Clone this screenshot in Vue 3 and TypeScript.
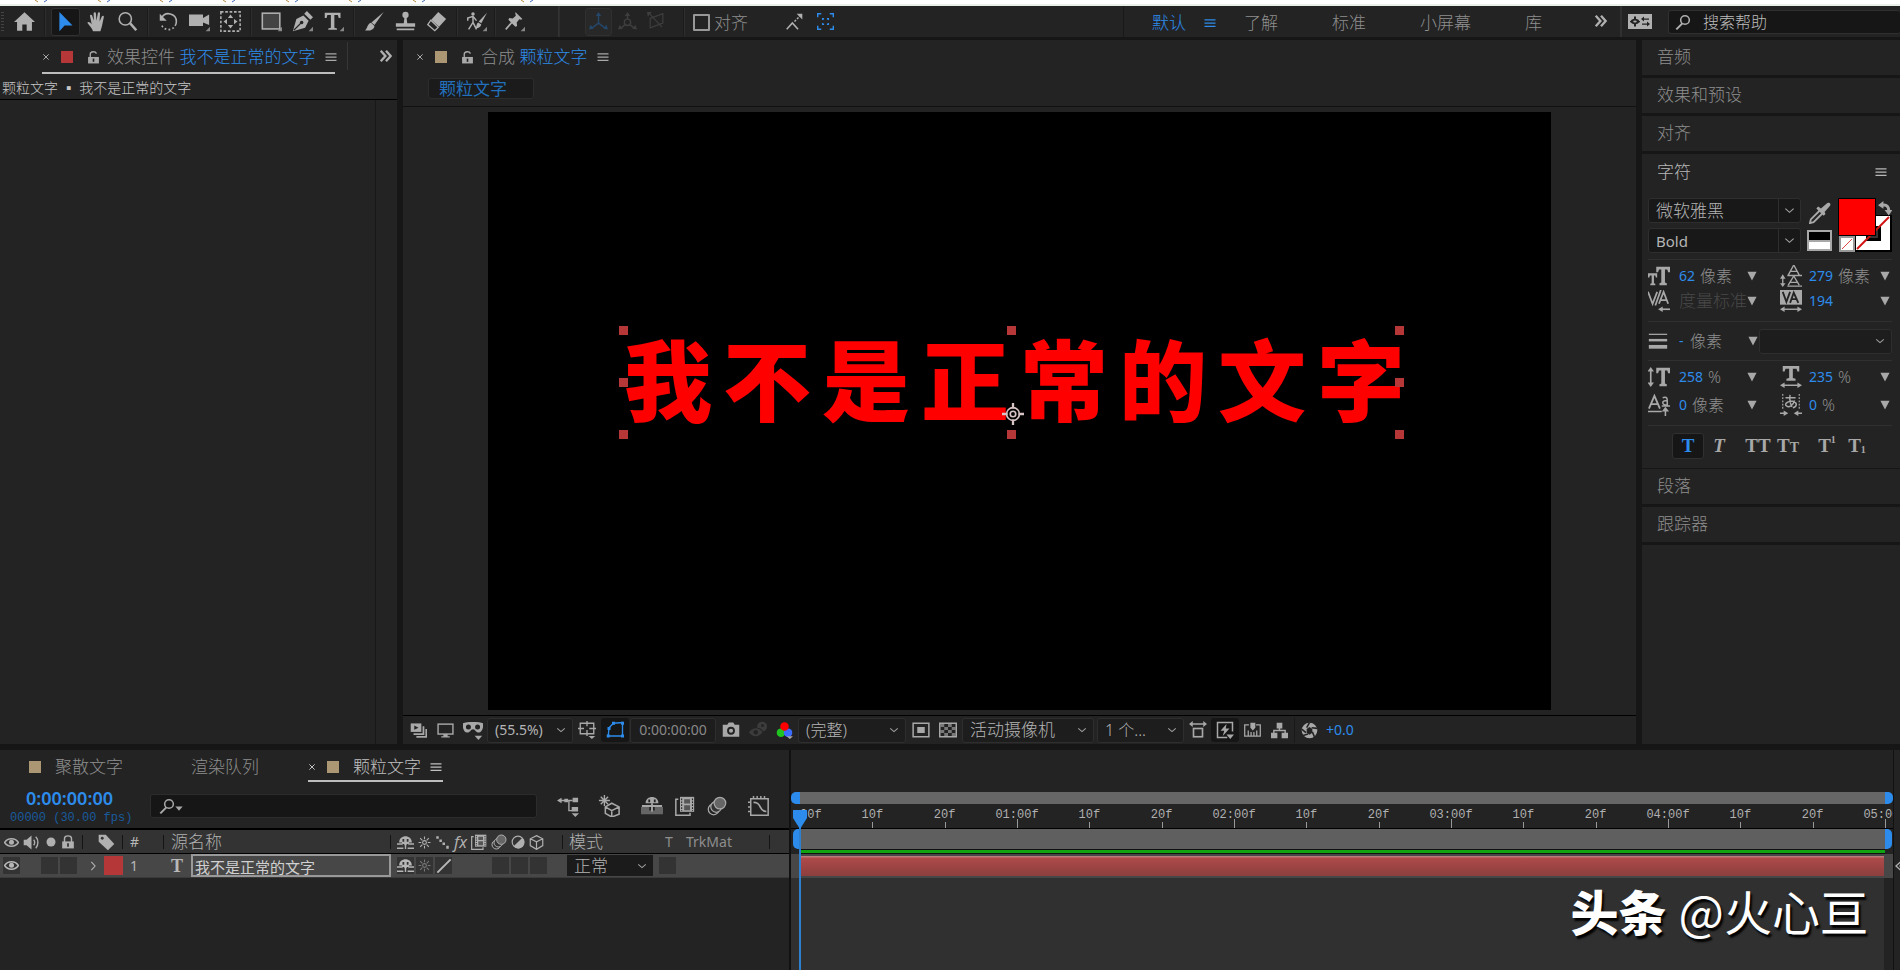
<script setup lang="ts">
import { ref } from 'vue'

const icons: Record<string, string> = {
  home: '<path d="M12 1.500 0 12.500h3.500v10H9.500v-7h5v7h6v-10H24z" fill="currentColor"/>',
  select: '<path d="M5 1v22l6-6.500h9z" fill="currentColor"/>',
  hand: '<path d="M8 23c-1-3-4-6-6.500-9.500 1-1.500 3-1 5 1.500L4.500 5.500c0-1.600 2-1.800 2.500-.3L9 11 8.700 2.500c.2-1.600 2.400-1.600 2.600 0L12 11l1.500-8.500c.4-1.500 2.500-1.200 2.500.3L15.500 12l2.700-6c.8-1.300 2.500-.7 2.200.9L18.500 16c-.6 3-1.500 5-2 7z" fill="currentColor"/>',
  zoom: '<circle cx="9.500" cy="9" r="7" fill="none" stroke="currentColor" stroke-width="1.800"/><path d="m15 14 7 8" stroke="currentColor" stroke-width="3"/>',
  rotate: '<path d="M4 8a9 9 0 0 1 17 4 9 9 0 0 1-1.500 5" fill="none" stroke="currentColor" stroke-width="1.800"/><path d="M2 3v8h8z" fill="currentColor"/><path d="M18 19a9 9 0 0 1-14-3" fill="none" stroke="currentColor" stroke-width="2" stroke-dasharray="2 2.500"/>',
  camera: '<path d="M0 4h16v4l7-4v12l-7-3v4H0z" fill="currentColor"/><path d="M24 18v5h-5z" fill="currentColor" opacity=".7"/>',
  pan: '<rect x="1" y="1" width="22" height="22" fill="none" stroke="currentColor" stroke-width="1.800" stroke-dasharray="3 2"/><path d="m12 4 3 4H9zM12 20l3-4H9zM4 12l4-3v6zM20 12l-4-3v6z" fill="currentColor"/>',
  rect: '<rect x="1.500" y="2.500" width="20" height="18" fill="#444" stroke="currentColor" stroke-width="1.800"/><path d="M24 18v5h-5z" fill="currentColor" opacity=".7"/>',
  pen: '<path d="M1 23 5 9l8-4 6 6-4 8z" fill="currentColor"/><path d="m14 3 3-3 7 7-3 3z" fill="currentColor"/><path d="m2 22 8-8" stroke="#232323" stroke-width="1.300"/><circle cx="11" cy="13" r="2" fill="#232323"/><path d="M24 18v5h-5z" fill="currentColor" opacity=".7"/>',
  type: '<path d="M2 2h18v6h-2l-1-3.500h-4V19l3 1v1.500H6V20l3-1V4.500H5L4 8H2z" fill="currentColor"/><path d="M24 18v5h-5z" fill="currentColor" opacity=".7"/>',
  brush: '<path d="M22.500 1 12 16l-3.500-3zM8 13.500l4 3.500c-1 5-6 6-11 5 3-1 2.500-7.500 7-8.500z" fill="currentColor"/>',
  stamp: '<circle cx="12" cy="4.500" r="3.600" fill="currentColor"/><path d="M10.800 7h2.400l.8 7h9v4H1v-4h9zM2 20h20v2H2z" fill="currentColor"/>',
  eraser: '<path d="m14 1 9 8-8 9-9-8z" fill="currentColor"/><path d="m5.500 10.500 8.500 8-4 4-8-7z" fill="none" stroke="currentColor" stroke-width="1.500"/>',
  puppet: '<circle cx="8" cy="3.500" r="2" fill="currentColor"/><path d="M2 11V8l6-2 4 5M8 6v7l-5 8M8 13l4 8" fill="none" stroke="currentColor" stroke-width="1.700"/><path d="M24 2 17.500 14l-3-2zM14 13l3.500 2.500c-1 3.500-4 4.500-7 4 2-1 1-5.500 3.500-6.500z" fill="currentColor"/><path d="M24 18v5h-5z" fill="currentColor" opacity=".7"/>',
  pin: '<path d="m13 1 8 8-1.500 1-2-.5-3 3.500.5 4-2 1-8-8 1-2 4 .5 3.500-3-.5-2z" fill="currentColor"/><path d="m9 13-7 8" stroke="currentColor" stroke-width="1.800"/><path d="M24 18v5h-5z" fill="currentColor" opacity=".7"/>',
  axis1: '<path d="M12 3v11l-8 6m8-6 8 6" fill="none" stroke="currentColor" stroke-width="1.800"/><path d="m12 0 3.500 5h-7zM0 22l2-6 4 5zM24 22l-6-1 4-5z" fill="currentColor"/>',
  axis2: '<path d="M12 3v6m-3 7-5 4m11-4 5 4" fill="none" stroke="currentColor" stroke-width="1.800"/><circle cx="12" cy="13" r="4" fill="none" stroke="currentColor" stroke-width="1.800"/><path d="m12 0 3.500 5h-7zM0 22l2-6 4 5zM24 22l-6-1 4-5z" fill="currentColor"/>',
  axis3: '<path d="M4 8 20 2v12L4 20zM3 2l16 17" fill="none" stroke="currentColor" stroke-width="1.500"/><path d="M0 0h6L1 6z" fill="currentColor"/>',
  snap1: '<path d="m1 23 8-9 8 9" fill="none" stroke="currentColor" stroke-width="2.200"/><path d="m12 12 8-8" stroke="currentColor" stroke-width="2" stroke-dasharray="3 2"/><path d="M15 1h8v8z" fill="currentColor"/>',
  snap2: '<path d="M1 6V1h5M18 1h5v5M23 18v5h-5M6 23H1v-5" fill="none" stroke="currentColor" stroke-width="2"/><path d="M8 10V8h2M14 8h2v2M16 14v2h-2M10 16H8v-2" fill="none" stroke="currentColor" stroke-width="2"/>',
  menu: '<path d="M1 5.500h22M1 12h22M1 18.500h22" stroke="currentColor" stroke-width="2.500"/>',
  more: '<path d="m3 3 8 9-8 9m9-18 8 9-8 9" fill="none" stroke="currentColor" stroke-width="4"/>',
  close: '<path d="m4 4 16 16M20 4 4 20" stroke="currentColor" stroke-width="3"/>',
  unlock: '<path d="M6 12V6c0-6 11-6 11-1" fill="none" stroke="currentColor" stroke-width="2.500"/><path d="M2 11h20v12H2z" fill="currentColor"/><path d="M12 14v6" stroke="#232323" stroke-width="3"/>',
  lock: '<path d="M6 12V6c0-6 12-6 12 0v6" fill="none" stroke="currentColor" stroke-width="2.500"/><path d="M2 11h20v12H2z" fill="currentColor"/><path d="M12 14v6" stroke="#333" stroke-width="3"/>',
  chevron: '<path d="m3 8 9 8 9-8" fill="none" stroke="currentColor" stroke-width="2.500"/>',
  right: '<path d="m8 2 9 10-9 10" fill="none" stroke="currentColor" stroke-width="2.500"/>',
  down: '<path d="M1 2h22L12 23z" fill="currentColor"/>',
  search: '<circle cx="15" cy="9" r="6.500" fill="none" stroke="currentColor" stroke-width="2.300"/><path d="m11 14-9 9" stroke="currentColor" stroke-width="3"/>',
  dropper: '<path d="m13 7 7-6c3-1 4 1 3 3l-6 7 1 2-2 2-8-8 2-2z" fill="currentColor"/><path d="M12 9 2 19l-1 4 4-1 10-10" fill="none" stroke="currentColor" stroke-width="2"/>',
  swap: '<path d="M7 7c8-2 11 3 11 10" fill="none" stroke="currentColor" stroke-width="5"/><path d="m0 7 9-7v13zM11 15h13l-6 9z" fill="currentColor"/>',
  fontSize: '<path d="M9 2h15v6h-2l-1-3h-2.500v14l2 1v2h-8v-2l2-1V5H12l-1 3H9z" fill="currentColor"/><path d="M0 9h10v4.500H8.500L8 11.500H6.500V20l1.500.500V22H2.500v-1.500L4 20v-8.500H2l-.5 2H0z" fill="currentColor"/>',
  leading: '<path d="M9 11 15 0l6 11M11 7h8M9 22l6-10 6 10M11 19h8M8 11.500h16M8 23h16" fill="none" stroke="currentColor" stroke-width="1.500"/><path d="M3 14v8" stroke="currentColor" stroke-width="1.500"/><path d="m3 10 3 5H0zM3 24l3-4H0z" fill="currentColor"/>',
  kerning: '<path d="m0 2 5 13 5-13M8 17 14 0M12 15l5-13 5 13M14 11h7" fill="none" stroke="currentColor" stroke-width="1.900"/><path d="M14 21h10" stroke="currentColor" stroke-width="1.800"/><path d="m11 21 5-3v6z" fill="currentColor"/>',
  tracking: '<path d="M0 0h24v16H0z" fill="currentColor"/><path d="m3 2 4 11 4-11M11 14l4-11 5 11M13 10h6" fill="none" stroke="#232323" stroke-width="2"/><path d="M3 21h18" stroke="currentColor" stroke-width="1.500"/><path d="m0 21 5-3v6zM24 21l-5-3v6z" fill="currentColor"/>',
  stroke: '<path d="M1 4h22" stroke="currentColor" stroke-width="1.500"/><path d="M1 11h22" stroke="currentColor" stroke-width="3"/><path d="M1 19h22" stroke="currentColor" stroke-width="4.500"/>',
  scaleV: '<path d="M9 2h15v6h-2l-1-3h-2.500v14l2 1v2h-8v-2l2-1V5H12l-1 3H9z" fill="currentColor"/><path d="M3 5v14" stroke="currentColor" stroke-width="1.800"/><path d="m3 1 3.500 5h-7zM3 23l3.500-5h-7z" fill="currentColor"/>',
  scaleH: '<path d="M3 0h18v6h-2l-1-3h-4v10l3 1v2H7v-2l3-1V3H6L5 6H3z" fill="currentColor"/><path d="M4 21h16" stroke="currentColor" stroke-width="1.600"/><path d="m0 21 5-3v6zM24 21l-5-3v6z" fill="currentColor"/>',
  baseline: '<path d="m1 16 6-14 6 14M3 11h8" fill="none" stroke="currentColor" stroke-width="2"/><path d="M16 4c6-2 5 2 5 8-6 0-7-5 0-5M0 19h15M15 13h9" fill="none" stroke="currentColor" stroke-width="1.700"/><path d="M19 18v6" stroke="currentColor" stroke-width="1.700"/><path d="m19 14 4 5h-8z" fill="currentColor"/>',
  tsume: '<path d="M3 0v16M21 0v16" stroke="currentColor" stroke-width="1.300" stroke-dasharray="2 1.500"/><path d="M6 4h11M11 1c-1 5 0 9 2 13M16 7c-2 6-6 8-9 6s2-6 7-5 5 6 0 7" fill="none" stroke="currentColor" stroke-width="1.600"/><path d="M0 21h6M18 21h6" stroke="currentColor" stroke-width="1.600"/><path d="m9 21-5-3v6zM15 21l5-3v6z" fill="currentColor"/>',
  stack: '<rect x="1" y="2" width="15" height="12" fill="currentColor"/><path d="m6 5 6 3-6 3z" fill="#232323"/><path d="M19 6v11H5M23 10v11H9" fill="none" stroke="currentColor" stroke-width="2.500"/>',
  monitor: '<rect x="1.500" y="3" width="21" height="14" fill="none" stroke="currentColor" stroke-width="2"/><path d="M9 17h6v3h3v2H6v-2h3z" fill="currentColor"/>',
  mask: '<path d="M0 4c4-2 20-2 24 0 1 6-2 11-5 11-4 0-4-4-7-4s-3 4-7 4C1 15-1 9 0 4z" fill="currentColor"/><circle cx="6.500" cy="8.500" r="3" fill="#232323"/><circle cx="17.500" cy="8.500" r="3" fill="#232323"/><path d="M14 19h9l-4.500 5z" fill="currentColor"/>',
  guides: '<path d="M3 3h18v14H3zM12 0v7m0 5v8M0 10h8m7 0h9" fill="none" stroke="currentColor" stroke-width="1.800"/><path d="M14 20h9l-4.500 4z" fill="currentColor"/>',
  shape: '<path d="M3 20 4 9l6-6 12-1v18z" fill="none" stroke="currentColor" stroke-width="1.800"/><path d="M1 18h4v4H1zM20 18h4v4h-4zM20 1h4v4h-4zM8 1h4v4H8zM2 8h4v4H2z" fill="currentColor"/>',
  snapshot: '<path d="M1 5h6l2-3h6l2 3h6v16H1z" fill="currentColor"/><circle cx="12" cy="13" r="4" fill="none" stroke="#232323" stroke-width="2.500"/>',
  peek: '<path d="M0 15c5-7 14-7 18 0-5 7-13 7-18 0z" fill="currentColor"/><circle cx="9" cy="15" r="3" fill="#232323"/><path d="M11 6c1-7 13-7 13 1 0 4-2 6-5 7-2-4-5-5-8-5z" fill="currentColor"/><circle cx="18" cy="6" r="2" fill="#232323"/>',
  rgb: '<circle cx="7" cy="15" r="6" fill="#1fc41f"/><circle cx="17" cy="15" r="6" fill="#3b6bff"/><circle cx="12" cy="6.500" r="6" fill="#f00"/><path d="M15 20h9l-4.500 4z" fill="currentColor"/>',
  roi: '<rect x="1.500" y="3" width="21" height="18" fill="none" stroke="currentColor" stroke-width="2"/><path d="M7 8h10v8H7z" fill="currentColor"/>',
  checker: '<rect x="1" y="3" width="22" height="18" fill="none" stroke="currentColor" stroke-width="2"/><path d="M2 4h5v4H2zM12 4h5v4h-5zM7 8h5v4H7zM17 8h5v4h-5zM2 12h5v4H2zM12 12h5v4h-5zM7 16h5v4H7zM17 16h5v4h-5z" fill="currentColor" opacity=".65"/>',
  aspect: '<path d="M3 4h18" stroke="currentColor" stroke-width="2"/><path d="m0 4 5-4v8zM24 4l-5-4v8z" fill="currentColor"/><rect x="6" y="10" width="12" height="11" fill="none" stroke="currentColor" stroke-width="2.200"/>',
  fast: '<path d="M22 14V2H2v20h13" fill="none" stroke="currentColor" stroke-width="2"/><path d="m14 4-8 9h5l-2 7 9-10h-5zM14 18h10l-5 6z" fill="currentColor"/>',
  timeline: '<path d="M7 4H1v16h22V4h-6M6 19v-7M10 19v-5M14 19v-5M18 19v-7" fill="none" stroke="currentColor" stroke-width="1.800"/><path d="M9 1h7v7l-3.500 4L9 8z" fill="currentColor"/>',
  flow: '<path d="M8 1h8v8H8zM0 15h9v8H0zM15 15h9v8h-9z" fill="currentColor"/><path d="M12 8v4M4 16v-4h16v4" fill="none" stroke="currentColor" stroke-width="2"/>',
  aperture: '<circle cx="12" cy="12" r="11" fill="currentColor"/><path d="M12 1 8 8m15 1-8-1m4 13-3-7M3 19l7-2m-9-7 6 5" stroke="#232323" stroke-width="2.200"/><path d="m12 7 4 3v5l-4 3-4-3v-5z" fill="#232323"/>',
  workspace: '<path d="M0 0h24v24H0z" fill="currentColor"/><circle cx="7" cy="12" r="3" fill="none" stroke="#232323" stroke-width="2.500"/><path d="M7 4v4m0 8v4M2 12h2m6 0h2M14 8h7M14 16h7" stroke="#232323" stroke-width="2"/><path d="m13 8 3-4v8zM22 16l-3-4v8z" fill="#232323"/>',
  tree: '<path d="M2 6h15M13 6v11h4" fill="none" stroke="currentColor" stroke-width="1.500"/><path d="m0 6 5-3v6zM8 4h4v4H8zM17 3h6v5h-6zM16 13h7v5h-7zM16 20h8l-4 4z" fill="currentColor"/>',
  draft: '<path d="M7 0v12M1 6h12M3 2l8 8M11 2l-8 8" stroke="currentColor" stroke-width="1.500"/><path d="m15 9 8 4v8l-8 3-7-4v-7zM8 13l7 4 8-4m-8 4v7" fill="none" stroke="currentColor" stroke-width="1.700"/>',
  shyBox: '<path d="M0 13h9v4h6v-4h9v8H0z" fill="currentColor" opacity=".5"/><path d="M1 12h22M12 9v9" stroke="currentColor" stroke-width="2"/><path d="M5 9c0-9 14-9 14 0z" fill="currentColor"/><path d="M9 5v3m6-3v3" stroke="#232323" stroke-width="2"/>',
  shy: '<path d="M0 14h9m6 0h9M0 20h9m6 0h9M12 10v11" stroke="currentColor" stroke-width="2"/><path d="M3 12c0-12 18-12 18 0h-4v4H7v-4z" fill="currentColor"/><path d="M9 7v4m6-4v4M9 17v-3m6 3v-3" stroke="#333" stroke-width="2.500"/>',
  sun: '<circle cx="12" cy="12" r="3.500" fill="none" stroke="currentColor" stroke-width="2"/><path d="M12 1v5m0 12v5M1 12h5m12 0h5M4 4l4 4m8 8 4 4M20 4l-4 4m-8 8-4 4" stroke="currentColor" stroke-width="2"/>',
  steps: '<path d="M2 2h4v4H2zM7 7h4v4H7zM12 12h4v4h-4zM18 17h4v5h-4z" fill="currentColor"/>',
  slash: '<path d="M2 22 22 2" stroke="currentColor" stroke-width="3"/>',
  film: '<path d="M4 4H1v19h17v-3" fill="none" stroke="currentColor" stroke-width="1.800"/><path d="M6 1h17v18H6z" fill="currentColor"/><path d="M8 3v15M21 3v15" stroke="#232323" stroke-width="1.300" stroke-dasharray="2 1.500"/><path d="M11 4h7v5h-7zM11 11h7v6h-7z" fill="#555"/>',
  blur: '<circle cx="8" cy="16" r="6.500" fill="none" stroke="currentColor" stroke-width="1.500"/><circle cx="11" cy="13" r="6.500" fill="#333" stroke="currentColor" stroke-width="1.500"/><circle cx="15.500" cy="8.500" r="7" fill="#666" stroke="currentColor" stroke-width="1.500"/>',
  graph: '<path d="M3 4h19v18H3zM6 1v3m4-3v3m4-3v3m4-3v3M0 8h3m-3 5h3m-3 5h3" fill="none" stroke="currentColor" stroke-width="1.600"/><path d="M6 8c10 0 5 10 14 10" fill="none" stroke="currentColor" stroke-width="1.800"/>',
  half: '<circle cx="12" cy="12" r="10" fill="none" stroke="currentColor" stroke-width="2"/><path d="M19 5A10 10 0 1 1 5 19z" fill="currentColor"/>',
  cube: '<path d="m12 1 10 5v11l-10 6-10-6V6zM2 6l10 5 10-5M12 11v12" fill="none" stroke="currentColor" stroke-width="1.900"/>',
  eye: '<path d="M1 12C6 4 18 4 23 12 18 20 6 20 1 12z" fill="none" stroke="currentColor" stroke-width="2.300"/><circle cx="12" cy="11.500" r="4" fill="currentColor"/>',
  speaker: '<path d="M1 8h4l7-6v20l-7-6H1z" fill="currentColor"/><path d="M15 8c2 2 2 6 0 8m3-12c4 4 4 12 0 16" fill="none" stroke="currentColor" stroke-width="2"/>',
  dot: '<circle cx="12" cy="12" r="9" fill="currentColor"/>',
  tag: '<path d="M1 1h10l12 13-9 9L1 11z" fill="currentColor"/><circle cx="6" cy="6" r="2" fill="#333"/>',
  anchor: '<circle cx="12" cy="12" r="7" fill="none" stroke="#d8c4c4" stroke-width="1.800"/><circle cx="12" cy="12" r="3" fill="none" stroke="#d8c4c4" stroke-width="1.800"/><path d="M12 0v6m0 12v6M0 12h6m12 0h6" stroke="#d8c4c4" stroke-width="2.500"/>',
  keyframe: '<path d="M13 3 3 12l10 9M13 8l-4 4 4 4" fill="none" stroke="currentColor" stroke-width="2"/>',
}

interface Tool { icon: string; label: string; active?: boolean }
const toolGroups: Tool[][] = [
  [{ icon: 'home', label: '主页' }],
  [{ icon: 'select', label: '选取', active: true }, { icon: 'hand', label: '手形' }, { icon: 'zoom', label: '缩放' }],
  [{ icon: 'rotate', label: '旋转' }, { icon: 'camera', label: '摄像机' }, { icon: 'pan', label: '锚点' }],
  [{ icon: 'rect', label: '矩形' }, { icon: 'pen', label: '钢笔' }, { icon: 'type', label: '文字' }],
  [{ icon: 'brush', label: '画笔' }, { icon: 'stamp', label: '仿制图章' }, { icon: 'eraser', label: '橡皮擦' }],
  [{ icon: 'puppet', label: 'Roto 笔刷' }],
  [{ icon: 'pin', label: '人偶位置控点' }],
]
const workspaces = ['了解', '标准', '小屏幕', '库']
const menuMarks = [35, 98, 160, 223, 286, 349, 413, 521]

const title = ref('我不是正常的文字')
const layerName = ref('我不是正常的文字')
const handles = [[0, 0], [50, 0], [100, 0], [0, 50], [100, 50], [0, 100], [50, 100], [100, 100]]

interface Metric { icon: string; value: string; unit: string; label: string; muted?: boolean }
const sizeRows: Metric[][] = [
  [{ icon: 'fontSize', value: '62', unit: '像素', label: '字体大小' }, { icon: 'leading', value: '279', unit: '像素', label: '行距' }],
  [{ icon: 'kerning', value: '', unit: '度量标准', label: '字偶间距', muted: true }, { icon: 'tracking', value: '194', unit: '', label: '字符间距' }],
]
const scaleRows: Metric[][] = [
  [{ icon: 'scaleV', value: '258', unit: '%', label: '垂直缩放' }, { icon: 'scaleH', value: '235', unit: '%', label: '水平缩放' }],
  [{ icon: 'baseline', value: '0', unit: '像素', label: '基线偏移' }, { icon: 'tsume', value: '0', unit: '%', label: '比例间距' }],
]

const ticks = Array.from({ length: 16 }, (_, i) => {
  const sec = Math.floor(i / 3)
  const rest = i % 3
  const text = rest ? `${rest}0f` : i ? `0${sec}:00f` : '00f'
  return { text, major: rest === 0, first: i === 0, left: (i / 15) * 100 }
})
</script>

<template>
  <div class="app">
    <div class="menu-edge">
      <svg width="600" height="4" aria-hidden="true">
        <g v-for="m in menuMarks" :key="m">
          <path :d="`M${m} 0l3 2`" stroke="#b98a3c" stroke-width="1" />
          <path :d="`M${m + 12} 0l-3 2`" stroke="#3c6cb9" stroke-width="1" />
        </g>
      </svg>
    </div>

    <header class="toolbar">
      <span class="grip"></span>
      <template v-for="(group, g) in toolGroups" :key="g">
        <span v-if="g" class="sep"></span>
        <button v-for="t in group" :key="t.icon" class="tool" :class="{ active: t.active, lone: g > 4 }" :aria-label="t.label">
          <svg viewBox="0 0 24 24" v-html="icons[t.icon]"></svg>
        </button>
      </template>
      <span class="sep wide"></span>
      <button class="tool axis boxed" aria-label="本地轴"><svg viewBox="0 0 24 24" v-html="icons.axis1"></svg></button>
      <button class="tool axis" aria-label="世界轴"><svg viewBox="0 0 24 24" v-html="icons.axis2"></svg></button>
      <button class="tool axis" aria-label="视图轴"><svg viewBox="0 0 24 24" v-html="icons.axis3"></svg></button>
      <span class="sep after-axis"></span>
      <label class="snap"><input type="checkbox" />对齐</label>
      <button class="tool small" aria-label="对齐边线"><svg viewBox="0 0 24 24" v-html="icons.snap1"></svg></button>
      <button class="tool small blue" aria-label="对齐特性"><svg viewBox="0 0 24 24" v-html="icons.snap2"></svg></button>

      <nav class="workspaces">
        <a href="#" class="blue">默认</a>
        <button class="blue ws-menu" aria-label="工作区菜单"><svg class="i12" viewBox="0 0 24 24" v-html="icons.menu"></svg></button>
        <a v-for="w in workspaces" :key="w" href="#">{{ w }}</a>
        <button class="ws-more" aria-label="更多工作区"><svg class="i14" viewBox="0 0 24 24" v-html="icons.more"></svg></button>
      </nav>
      <button class="ws-set" aria-label="同步设置"><svg class="i24" viewBox="0 0 24 24" preserveAspectRatio="none" v-html="icons.workspace"></svg></button>
      <label class="help">
        <svg class="i16" viewBox="0 0 24 24" v-html="icons.search"></svg>
        <input type="text" placeholder="搜索帮助" aria-label="搜索帮助" />
      </label>
    </header>

    <main class="main">
      <section class="effects">
        <div class="tabs">
          <div class="tab underlined">
            <button aria-label="关闭"><svg class="i8" viewBox="0 0 24 24" v-html="icons.close"></svg></button>
            <span class="swatch red"></span>
            <svg class="i13" viewBox="0 0 24 24" v-html="icons.unlock"></svg>
            <span class="tab-name">效果控件 <span class="blue">{{ title }}</span></span>
            <button aria-label="面板菜单"><svg class="i12" viewBox="0 0 24 24" v-html="icons.menu"></svg></button>
          </div>
          <span class="tab-line"></span>
          <button class="push" aria-label="更多面板"><svg class="i14" viewBox="0 0 24 24" v-html="icons.more"></svg></button>
        </div>
        <div class="path">颗粒文字 ▪ {{ title }}</div>
        <div class="effects-body"></div>
      </section>

      <section class="viewer">
        <div class="tabs">
          <div class="tab">
            <button aria-label="关闭"><svg class="i8" viewBox="0 0 24 24" v-html="icons.close"></svg></button>
            <span class="swatch tan"></span>
            <svg class="i13" viewBox="0 0 24 24" v-html="icons.unlock"></svg>
            <span class="tab-name">合成 <span class="blue">颗粒文字</span></span>
            <button aria-label="面板菜单"><svg class="i12" viewBox="0 0 24 24" v-html="icons.menu"></svg></button>
          </div>
        </div>
        <div class="crumbs"><button class="crumb">颗粒文字</button></div>
        <div class="stage">
          <div class="canvas">
            <div class="layer-box">
              <p class="hero">{{ title }}</p>
              <i v-for="(h, n) in handles" :key="n" class="handle" :style="{ left: h[0] + '%', top: h[1] + '%' }"></i>
              <svg class="anchor" viewBox="0 0 24 24" v-html="icons.anchor"></svg>
            </div>
          </div>
        </div>
        <footer class="viewbar">
          <button class="vb" aria-label="始终预览"><svg class="i17" viewBox="0 0 24 24" v-html="icons.stack"></svg></button>
          <button class="vb" aria-label="主查看器"><svg class="i17" viewBox="0 0 24 24" v-html="icons.monitor"></svg></button>
          <button class="vb wide" aria-label="沉浸式视频"><svg class="i20" viewBox="0 0 24 24" v-html="icons.mask"></svg></button>
          <span class="pick w-zoom"><select aria-label="放大率"><option>(55.5%)</option></select><svg viewBox="0 0 24 24" v-html="icons.chevron"></svg></span>
          <button class="vb wide" aria-label="网格和参考线"><svg class="i18" viewBox="0 0 24 24" v-html="icons.guides"></svg></button>
          <button class="vb wide blue pressed" aria-label="蒙版可见性"><svg class="i18" viewBox="0 0 24 24" v-html="icons.shape"></svg></button>
          <button class="time">0:00:00:00</button>
          <button class="vb" aria-label="快照"><svg class="i18" viewBox="0 0 24 24" v-html="icons.snapshot"></svg></button>
          <button class="vb dim" aria-label="显示快照"><svg class="i18" viewBox="0 0 24 24" v-html="icons.peek"></svg></button>
          <button class="vb" aria-label="通道"><svg class="i17" viewBox="0 0 24 24" v-html="icons.rgb"></svg></button>
          <span class="pick w-res"><select aria-label="分辨率"><option>(完整)</option></select><svg viewBox="0 0 24 24" v-html="icons.chevron"></svg></span>
          <button class="vb" aria-label="目标区域"><svg class="i18" viewBox="0 0 24 24" v-html="icons.roi"></svg></button>
          <button class="vb" aria-label="透明网格"><svg class="i18" viewBox="0 0 24 24" v-html="icons.checker"></svg></button>
          <span class="pick w-cam"><select aria-label="3D 视图"><option>活动摄像机</option></select><svg viewBox="0 0 24 24" v-html="icons.chevron"></svg></span>
          <span class="pick w-view"><select aria-label="视图布局"><option>1 个...</option></select><svg viewBox="0 0 24 24" v-html="icons.chevron"></svg></span>
          <button class="vb" aria-label="像素长宽比"><svg class="i18" viewBox="0 0 24 24" v-html="icons.aspect"></svg></button>
          <button class="vb wide pressed" aria-label="快速预览"><svg class="i18" viewBox="0 0 24 24" v-html="icons.fast"></svg></button>
          <button class="vb" aria-label="时间轴"><svg class="i17" viewBox="0 0 24 24" v-html="icons.timeline"></svg></button>
          <button class="vb" aria-label="流程图"><svg class="i17" viewBox="0 0 24 24" v-html="icons.flow"></svg></button>
          <span class="vsep"></span>
          <button class="vb" aria-label="重置曝光度"><svg class="i17" viewBox="0 0 24 24" v-html="icons.aperture"></svg></button>
          <span class="blue exposure">+0.0</span>
        </footer>
      </section>

      <aside class="side">
        <button class="fold">音频</button>
        <button class="fold">效果和预设</button>
        <button class="fold">对齐</button>
        <div class="char-head">字符<button aria-label="面板菜单"><svg class="i12" viewBox="0 0 24 24" v-html="icons.menu"></svg></button></div>
        <div class="fonts">
          <div class="font-picks">
            <span class="pick split"><select aria-label="字体"><option>微软雅黑</option></select><svg viewBox="0 0 24 24" v-html="icons.chevron"></svg></span>
            <span class="pick split"><select aria-label="字体样式"><option>Bold</option></select><svg viewBox="0 0 24 24" v-html="icons.chevron"></svg></span>
          </div>
          <div class="font-aux">
            <button aria-label="吸管"><svg class="i22" viewBox="0 0 24 24" v-html="icons.dropper"></svg></button>
            <button class="bw" aria-label="黑白"></button>
          </div>
          <svg class="colors" viewBox="0 0 54 54" aria-label="填充和描边">
            <path d="M17 17h37v37H17z" fill="#000" /><path d="M18 18h34v34H18z" fill="#fff" />
            <path d="M28 28h15v15H28z" fill="#000" /><path d="M31 31h9v9h-9z" fill="#333" />
            <path d="M19 51 51 19" stroke="#d01212" stroke-width="2" />
            <path d="M1 38h16v16H1z" fill="#999" /><path d="M3 40h12v12H3z" fill="#fff" /><path d="m4 51 10-10" stroke="#d44" />
            <path d="M37 0h17v17H38z" fill="#232323" />
            <path d="M0 0h38v38H0z" fill="#000" /><path d="M1 1h36v36H1z" fill="red" />
            <g class="swap" v-html="icons.swap"></g>
          </svg>
        </div>
        <div class="group">
          <div v-for="(row, r) in sizeRows" :key="r" class="metrics">
            <template v-for="m in row" :key="m.label">
              <svg class="i22" viewBox="0 0 24 24" v-html="icons[m.icon]"></svg>
              <label class="metric" :class="{ muted: m.muted }">
                <input v-if="m.value" type="text" :value="m.value" :aria-label="m.label" :style="{ width: m.value.length + 'ch' }" />{{ m.unit }}
              </label>
              <button :aria-label="m.label + '选项'"><svg class="i10" viewBox="0 0 24 24" v-html="icons.down"></svg></button>
            </template>
          </div>
        </div>
        <div class="group strokes">
          <svg class="i20" viewBox="0 0 24 24" v-html="icons.stroke"></svg>
          <label class="metric"><input type="text" value="-" aria-label="描边宽度" class="dash" />像素</label>
          <button aria-label="描边选项"><svg class="i10" viewBox="0 0 24 24" v-html="icons.down"></svg></button>
          <span class="pick"><select aria-label="描边方式"><option></option></select><svg viewBox="0 0 24 24" v-html="icons.chevron"></svg></span>
        </div>
        <div class="group scale">
          <div v-for="(row, r) in scaleRows" :key="r" class="metrics">
            <template v-for="m in row" :key="m.label">
              <svg class="i22" viewBox="0 0 24 24" v-html="icons[m.icon]"></svg>
              <label class="metric">
                <input type="text" :value="m.value" :aria-label="m.label" :style="{ width: m.value.length + 'ch' }" />{{ m.unit }}
              </label>
              <button :aria-label="m.label + '选项'"><svg class="i10" viewBox="0 0 24 24" v-html="icons.down"></svg></button>
            </template>
          </div>
        </div>
        <div class="styles">
          <button class="on" aria-label="仿粗体">T</button>
          <button class="it" aria-label="仿斜体">T</button>
          <button class="caps" aria-label="全部大写字母">TT</button>
          <button aria-label="小型大写字母">T<small>T</small></button>
          <button aria-label="上标" class="sup">T<sup>1</sup></button>
          <button aria-label="下标">T<sub>1</sub></button>
        </div>
        <button class="fold">段落</button>
        <button class="fold">跟踪器</button>
      </aside>
    </main>

    <section class="timeline">
      <div class="tl-left">
        <div class="tl-tabs">
          <button class="tl-tab first"><span class="swatch tan"></span>聚散文字</button>
          <button class="tl-tab mid">渲染队列</button>
          <div class="tl-tab current">
            <button aria-label="关闭"><svg class="i8" viewBox="0 0 24 24" v-html="icons.close"></svg></button>
            <span class="swatch tan"></span>颗粒文字
            <button class="push" aria-label="面板菜单"><svg class="i12" viewBox="0 0 24 24" v-html="icons.menu"></svg></button>
          </div>
        </div>
        <div class="tl-tools">
          <div class="clock"><strong>0:00:00:00</strong><span>00000 (30.00 fps)</span></div>
          <label class="tl-search">
            <svg class="i16" viewBox="0 0 24 24" v-html="icons.search"></svg><svg class="tri" viewBox="0 0 24 24" preserveAspectRatio="none" v-html="icons.down"></svg>
            <input type="text" aria-label="搜索图层" />
          </label>
          <button aria-label="合成微型流程图"><svg class="i22" viewBox="0 0 24 24" v-html="icons.tree"></svg></button>
          <button aria-label="草图 3D" class="g1"><svg class="i22" viewBox="0 0 24 24" v-html="icons.draft"></svg></button>
          <button aria-label="隐藏消隐图层" class="g2"><svg class="i22" viewBox="0 0 24 24" v-html="icons.shyBox"></svg></button>
          <button aria-label="帧混合" class="g3"><svg class="i20" viewBox="0 0 24 24" v-html="icons.film"></svg></button>
          <button aria-label="运动模糊" class="g3"><svg class="i20" viewBox="0 0 24 24" v-html="icons.blur"></svg></button>
          <button aria-label="图表编辑器" class="g2"><svg class="i22" viewBox="0 0 24 24" v-html="icons.graph"></svg></button>
        </div>
        <div class="cols head">
          <span class="av">
            <svg class="i15" viewBox="0 0 24 24" v-html="icons.eye"></svg>
            <svg class="i17" viewBox="0 0 24 24" v-html="icons.speaker"></svg>
            <svg class="i12" viewBox="0 0 24 24" v-html="icons.dot"></svg>
            <svg class="i14" viewBox="0 0 24 24" v-html="icons.lock"></svg>
          </span>
          <span class="c-tag"><svg class="i17" viewBox="0 0 24 24" v-html="icons.tag"></svg></span>
          <span class="c-num">#</span>
          <span class="c-name">源名称</span>
          <span class="switches">
            <svg class="i17" viewBox="0 0 24 24" v-html="icons.shy"></svg>
            <svg class="i13" viewBox="0 0 24 24" v-html="icons.sun"></svg>
            <svg class="i15" viewBox="0 0 24 24" v-html="icons.steps"></svg>
            <em>fx</em>
            <svg class="i16" viewBox="0 0 24 24" v-html="icons.film"></svg>
            <svg class="i16" viewBox="0 0 24 24" v-html="icons.blur"></svg>
            <svg class="i14" viewBox="0 0 24 24" v-html="icons.half"></svg>
            <svg class="i15" viewBox="0 0 24 24" v-html="icons.cube"></svg>
          </span>
          <span class="c-mode">模式</span>
          <span class="c-t">T</span>
          <span class="c-trk">TrkMat</span>
        </div>
        <div class="cols row">
          <span class="av cells">
            <button class="cell" aria-label="可见"><svg class="i15" viewBox="0 0 24 24" v-html="icons.eye"></svg></button>
            <i class="hole"></i>
            <button class="cell" aria-label="独奏"></button>
            <button class="cell" aria-label="锁定"></button>
          </span>
          <span class="c-tag lay"><button aria-label="展开"><svg class="i10" viewBox="0 0 24 24" v-html="icons.right"></svg></button><i class="label-red"></i></span>
          <span class="c-num">1</span>
          <span class="c-type">T</span>
          <input v-model="layerName" class="name" type="text" aria-label="图层名称" />
          <span class="switches cells">
            <button class="cell" aria-label="消隐"><svg class="i17" viewBox="0 0 24 24" v-html="icons.shy"></svg></button>
            <button class="cell faint" aria-label="折叠"><svg class="i13" viewBox="0 0 24 24" v-html="icons.sun"></svg></button>
            <button class="cell" aria-label="品质"><svg class="i16" viewBox="0 0 24 24" v-html="icons.slash"></svg></button>
            <i class="hole"></i><i class="hole"></i>
            <button class="cell" aria-label="运动模糊开关"></button>
            <button class="cell" aria-label="调整图层"></button>
            <button class="cell" aria-label="3D 图层"></button>
          </span>
          <span class="pick mode"><select aria-label="混合模式"><option>正常</option></select><svg viewBox="0 0 24 24" v-html="icons.chevron"></svg></span>
          <button class="cell" aria-label="保留透明度"></button>
        </div>
      </div>

      <div class="tl-right">
        <div class="navigator"></div>
        <div class="ruler">
          <div class="scale-line">
            <span v-for="t in ticks" :key="t.left" class="tick" :class="{ major: t.major, first: t.first }" :style="{ left: t.left + '%' }">{{ t.text }}</span>
          </div>
        </div>
        <div class="workarea"></div>
        <div class="cache"></div>
        <div class="track"><div class="bar"></div></div>
        <div class="tracks"></div>
        <div class="playhead"></div>
      </div>
      <div class="tl-edge"><svg class="i16" viewBox="0 0 24 24" v-html="icons.keyframe"></svg></div>
    </section>

    <div class="watermark"><b>头条</b> @火心亘</div>
  </div>
</template>

<style>
html, body { background: #161616; overflow: hidden; }
</style>

<style scoped>
* { box-sizing: border-box; }
.app {
  position: relative; display: flex; flex-direction: column; height: 100vh; overflow: hidden;
  background: #161616; color: #8e8e8e;
  font: 300 17px/20px "Noto Sans", "Noto Sans CJK SC", sans-serif;
}
button, input, select { font: inherit; color: inherit; background: none; border: 0; padding: 0; margin: 0; outline: 0; }
button { display: flex; align-items: center; justify-content: center; flex: none; }
a { color: inherit; text-decoration: none; }
svg { display: block; flex: none; }
.blue { color: #2d8ceb; }
.push { margin-left: auto; }
.i8 { width: 8px; height: 8px; }
.i10 { width: 10px; height: 10px; }
.i12 { width: 12px; height: 12px; }
.i13 { width: 13px; height: 13px; }
.i14 { width: 14px; height: 14px; }
.i15 { width: 15px; height: 15px; }
.i16 { width: 16px; height: 16px; }
.i17 { width: 17px; height: 17px; }
.i18 { width: 18px; height: 18px; }
.i20 { width: 20px; height: 20px; }
.i22 { width: 22px; height: 22px; }
.i24 { width: 24px; height: 15px; }

.menu-edge { height: 6px; flex: none; background: #fff; border-bottom: 2px solid #e9efe9; }

.toolbar { display: flex; align-items: center; flex: none; height: 31px; background: #232323; color: #b0b0b0; }
.grip { width: 3px; height: 20px; margin: 0 5px 0 1px; background: repeating-linear-gradient(#444 0 1px, #232323 1px 3px); }
.tool { width: 31px; height: 28px; border-radius: 3px; }
.tool svg { width: 21px; height: 21px; }
.tool.active { width: 29px; margin: 0 1px; background: #161616; color: #2d8ceb; border: 1px solid #303030; }
.tool.lone { width: 28px; }
.sep { width: 2px; height: 28px; margin: 0 4px; background: #1b1b1b; border-right: 1px solid #2e2e2e; }
.sep.wide { height: 31px; margin: 0 24px 0 30px; background: #333; }
.sep.after-axis { margin-left: 12px; }
.tool.axis { width: 27px; margin: 0 1px; color: #3e3e3e; }
.tool.axis svg { width: 19px; height: 19px; }
.tool.axis.boxed { color: #24476a; background: #282828; border: 1px solid #303030; }
.snap { display: flex; align-items: center; gap: 4px; height: 28px; padding-top: 2px; margin: 0 31px 0 4px; color: #8e8e8e; }
.snap input { appearance: none; width: 17px; height: 17px; border: 2px solid #989898; border-radius: 1px; }
.tool.small svg { width: 17px; height: 17px; }
.workspaces { display: flex; align-items: center; gap: 54px; margin-left: auto; height: 31px; padding: 2px 12px 0 28px; border-left: 1px solid #191919; color: #8e8e8e; }
.workspaces button { color: #b0b0b0; }
.workspaces .ws-menu { color: #2d8ceb; margin: 0 -26px 0 -36px; }
.workspaces .ws-more { margin: 0 0 3px -2px; }
.ws-set { height: 31px; padding: 0 16px 0 6px; border-left: 2px solid #303030; }
.help { display: flex; align-items: center; gap: 12px; width: 232px; height: 24px; padding-left: 6px; background: #161616; border: 1px solid #303030; border-right: 0; border-radius: 3px; }
.help input { width: 180px; font-size: 16px; color: #c0c0c0; }
.help input::placeholder { color: #bcbcbc; opacity: 1; }

.main { display: flex; flex: 1; gap: 6px; min-height: 0; margin-top: 3px; }
.effects, .viewer, .side { display: flex; flex-direction: column; background: #232323; }
.effects { width: 397px; flex: none; }
.viewer { flex: 1; min-width: 0; }
.side { width: 258px; flex: none; }

.tabs { display: flex; align-items: center; height: 35px; flex: none; padding-bottom: 3px; }
.tab { display: flex; align-items: center; height: 32px; padding: 2px 0 0; margin-left: 13px; color: #8e8e8e; }
.tab.underlined { width: 293px; margin-left: 42px; }
.underlined { box-shadow: 0 2px #bdbdbd; }
.tab svg { color: #a8a8a8; }
.tab .swatch { margin: 0 14px 0 11px; }
.tab-name { margin: 0 10px 0 7px; white-space: nowrap; }
.swatch { width: 12px; height: 12px; flex: none; }
.red { background: #b53737; }
.tan { background: #ac9774; }
.tab-line { width: 1px; height: 28px; margin-left: 12px; background: #353535; }
.tabs .push { margin-right: 4px; color: #b0b0b0; }
.path { height: 25px; flex: none; padding-left: 2px; font-size: 14px; line-height: 26px; color: #c8c8c8; border-bottom: 1px solid #000; }
.effects-body { flex: 1; width: 376px; border-right: 1px solid #181818; }

.crumbs { display: flex; align-items: center; height: 32px; flex: none; padding: 0 25px 4px; border-bottom: 1px solid #111; }
.crumb { width: 106px; height: 21px; justify-content: flex-start; padding-left: 10px; font-weight: 400; color: #2270bc; background: #1b1b1b; border: 1px solid #2c2c2c; border-radius: 3px; }
.stage { flex: 1; min-height: 0; display: flex; justify-content: center; padding: 5px 0; }
.canvas { position: relative; height: 100%; aspect-ratio: 16 / 9; background: #000; }
.layer-box { position: absolute; left: 136px; top: 219px; width: 776px; height: 104px; }
.hero { margin: 0; font: 900 88px/90px "Noto Sans CJK SC", sans-serif; letter-spacing: 11px; color: #f00; white-space: nowrap; }
.handle { position: absolute; width: 9px; height: 9px; margin: -5px 0 0 -5px; background: #b53737; }
.anchor { position: absolute; left: 50%; top: 80%; width: 22px; height: 22px; margin: -11px 0 0 -10px; }

.viewbar { display: flex; align-items: center; height: 29px; flex: none; padding-left: 2px; border-top: 1px solid #000; color: #a8a8a8; font-size: 14px; }
.vb { width: 27px; height: 24px; }
.vb.wide { width: 28px; border-radius: 3px; }
.vb.pressed { background: #161616; }
.vb.dim { color: #3c3c3c; }
.vb.blue { color: #2d8ceb; }
.time { width: 86px; height: 25px; margin: 0 1px; background: #1d1d1d; border: 1px solid #2e2e2e; border-radius: 3px; color: #888; font-size: 14px; font-weight: 400; }
.pick { display: grid; align-items: center; height: 25px; background: #1d1d1d; border: 1px solid #2e2e2e; border-radius: 3px; flex: none; }
.pick select { grid-area: 1 / 1; appearance: none; width: 100%; height: 100%; padding-left: 7px; color: #b4b4b4; }
.pick > svg { grid-area: 1 / 1; justify-self: end; width: 10px; height: 10px; margin-right: 6px; pointer-events: none; color: #a0a0a0; }
.w-zoom { width: 86px; font-weight: 400; }
.w-res { width: 108px; margin-right: 1px; font-size: 16px; }
.w-cam { width: 132px; margin: 0 3px 0 1px; font-size: 17px; }
.w-view { width: 87px; font-size: 16px; }
.vsep { width: 1px; height: 25px; margin: 0 1px; background: #191919; }
.exposure { margin-left: 3px; font-weight: 400; }

.fold { justify-content: flex-start; height: 38px; padding: 0 0 1px 15px; border-bottom: 3px solid #161616; }
.char-head { display: flex; align-items: center; justify-content: space-between; height: 36px; padding: 0 13px 0 15px; color: #b8b8b8; }
.fonts { display: flex; margin: 8px 8px 0 6px; padding-bottom: 6px; border-bottom: 1px solid #303030; }
.font-picks { display: flex; flex-direction: column; gap: 5px; width: 153px; }
.split { background: #181818; }
.split select { font-size: 17px; }
.split:last-child select { font-size: 15px; font-weight: 400; }
.split > svg { width: 22px; height: 23px; margin: 0; padding: 6px 5px; border-left: 1px solid #2e2e2e; }
.font-aux { display: flex; flex-direction: column; gap: 6px; margin: 4px 6px 0 6px; color: #a8a8a8; }
.bw { width: 25px; height: 21px; border: 2px solid #a8a8a8; background: linear-gradient(#000 8px, #a8a8a8 8px 10px, #fff 10px); }
.colors { width: 54px; height: 54px; color: #a8a8a8; }
.swap { transform: translate(40px, 3px) scale(0.6); }
.group { margin: 0 8px 0 6px; padding: 3px 0 8px; border-bottom: 1px solid #303030; color: #a8a8a8; }
.metrics { display: grid; grid-template-columns: 31px 68px 33px 29px 71px 10px; justify-content: start; align-items: center; height: 25px; }
.metrics > button { justify-self: start; }
.metric { display: flex; align-items: center; gap: 5px; white-space: nowrap; color: #8e8e8e; font-size: 16px; }
.metric input { color: #2d8ceb; font-size: 14px; font-weight: 400; min-width: 0; }
.metric.muted { color: #484848; font-size: 17px; }
.metric .dash { width: 6px; }
.group.scale { padding: 2px 0 6px; }
.scale .metrics { height: 28px; }
.group.strokes { display: grid; grid-template-columns: 31px 68px 12px 1fr; align-items: center; height: 39px; padding: 0; }
.styles { display: flex; align-items: center; height: 43px; padding: 0 0 2px 30px; border-bottom: 1px solid #161616; color: #a8a8a8; font: 700 19px/20px "Liberation Serif", serif; }
.styles button { width: 30px; height: 26px; }
.styles .on { width: 32px; color: #2d8ceb; background: #161616; border: 1px solid #303030; border-radius: 3px; }
.styles .it { font-style: italic; margin-right: 9px; }
.styles .sup { margin-left: 9px; }
.styles small { font-size: 14px; padding-top: 3px; }
.styles sup, .styles sub { font-size: 10px; line-height: 10px; align-self: flex-start; padding-top: 2px; }
.styles sub { align-self: flex-end; padding: 0 0 4px; }

.timeline { display: flex; flex: none; height: 220px; margin-top: 6px; background: #232323; }
.tl-left { display: flex; flex-direction: column; width: 791px; flex: none; border-right: 2px solid #111; }
.tl-tabs { display: flex; height: 33px; }
.tl-tab { display: flex; align-items: center; height: 34px; }
.tl-tab.first { gap: 14px; margin-left: 29px; }
.tl-tab.mid { margin-left: 68px; }
.tl-tab.current { gap: 11px; width: 135px; height: 30px; padding: 4px 0 0; margin-left: 49px; color: #c0c0c0; box-shadow: 0 2px #bdbdbd; white-space: nowrap; }
.current .swatch { margin-right: 3px; }
.tl-tab.current .push { margin-left: -2px; }
.tl-tools { display: flex; align-items: center; height: 45px; color: #a8a8a8; }
.clock { display: flex; flex-direction: column; width: 136px; padding: 2px 0 0 10px; margin-right: 14px; white-space: nowrap; }
.clock strong { padding-left: 16px; font: 600 18px/22px "Noto Sans", sans-serif; color: #2d8ceb; }
.clock span { font: 400 12px/18px "Liberation Mono", monospace; color: #195a9c; }
.tl-search { display: flex; align-items: center; width: 387px; height: 24px; margin-right: 20px; padding-left: 8px; background: #161616; border: 1px solid #2c2c2c; border-radius: 3px; }
.tri { width: 8px; height: 5px; margin-top: 6px; }
.tl-search input { flex: 1; min-width: 0; }
.g1 { margin-left: 19px; }
.g2 { margin-left: 21px; }
.g3 { margin-left: 12px; }
.cols { display: flex; align-items: center; flex: none; }
.head { height: 26px; padding-top: 1px; background: #333; border-top: 2px solid #000; border-bottom: 1px solid #000; color: #b0b0b0; font-size: 16px; }
.head > span { height: 14px; border-right: 1px solid #141414; display: flex; align-items: center; flex: none; }
.head > .c-mode, .head > .c-t { border: 0; }
.head .av { width: 83px; padding: 0 7px 0 4px; justify-content: space-between; }
.c-tag { display: flex; align-items: center; width: 40px; padding-left: 15px; flex: none; }
.c-num { width: 41px; padding-left: 7px; flex: none; font-size: 14px; font-weight: 400; color: #b8b8b8; }
.c-name { width: 227px; padding-left: 7px; font-size: 17px; }
.head .switches { width: 172px; padding: 0 18px 0 6px; justify-content: space-between; }
.switches em { font: italic 400 16px/16px "Noto Sans", sans-serif; }
.c-mode { width: 102px; padding-left: 6px; font-size: 17px; }
.c-t { width: 21px; font-size: 14px; font-weight: 400; color: #8e8e8e; }
.c-trk { width: 84px; font-size: 14px; font-weight: 400; color: #8e8e8e; }
.row { height: 24px; background: #474747; color: #b8b8b8; border-bottom: 1px solid #3a3a3a; }
.cell, .hole { width: 17px; height: 17px; flex: none; }
.cell { background: #333; }
.cells { display: flex; gap: 2px; align-items: center; flex: none; }
.av.cells { width: 83px; padding-left: 3px; }
.faint { color: #777; }
.lay { padding-left: 5px; gap: 6px; }
.label-red { width: 19px; height: 19px; background: #b53737; }
.c-type { width: 27px; padding-left: 7px; font: 700 18px/20px "Liberation Serif", serif; }
.name { width: 200px; height: 23px; padding: 2px 0 0 2px; border: 2px solid #999; font-size: 15px; font-weight: 400; color: #d0d0d0; flex: none; }
.switches.cells { width: 176px; padding-left: 6px; }
.mode { width: 86px; height: 21px; border-radius: 0; margin-right: 6px; background: #1b1b1b; border: 0; }

.tl-right { position: relative; display: flex; flex-direction: column; flex: 1; min-width: 0; border-right: 1px solid #111; }
.navigator { height: 12px; margin-top: 42px; background: #666; border-left: 9px solid #2d8ceb; border-right: 8px solid #2d8ceb; border-radius: 5px; flex: none; }
.ruler { height: 25px; flex: none; overflow: hidden; padding: 0 8px 0 9px; border-bottom: 1px solid #000; }
.scale-line { position: relative; height: 25px; }
.tick { position: absolute; top: 3px; width: 60px; height: 22px; margin-left: -30px; text-align: center; font: 400 12px/16px "Liberation Mono", monospace; color: #b0b0b0; }
.tick.first { padding-left: 30px; text-align: left; }
.tick::after { content: ""; position: absolute; left: 30px; bottom: 0; width: 1px; height: 7px; background: #999; }
.tick.major::after { height: 10px; }
.workarea { height: 20px; flex: none; margin-left: 2px; margin-right: 1px; background: #5f5f5f; border-left: 7px solid #2d8ceb; border-right: 7px solid #2d8ceb; border-radius: 5px; }
.cache { height: 5px; flex: none; margin: 0 8px 0 9px; border-top: 1px solid #111; border-bottom: 1px solid #111; background: #12a312; }
.track { height: 24px; flex: none; padding: 2px 9px; background: #474747; }
.bar { height: 20px; background: linear-gradient(#b87a7a 1px, #ae4a4a 2px, #8c3e3e); border-left: 1px solid #b53737; }
.tracks { flex: 1; margin-right: 9px; background: #303030; }
.playhead { position: absolute; left: 2px; top: 60px; bottom: 0; width: 14px; background: linear-gradient(#2d7fd0, #2d7fd0) 6px 0 / 2px 100% no-repeat; }
.playhead::before { content: ""; display: block; height: 18px; background: #2d8ceb; clip-path: polygon(0 0, 100% 0, 100% 45%, 55% 100%, 45% 100%, 0 45%); }
.tl-edge { width: 6px; flex: none; padding-top: 108px; overflow: hidden; color: #b0b0b0; }

.watermark { position: absolute; right: 32px; bottom: 25px; display: flex; gap: 12px; font: 400 48px/70px "Noto Sans CJK SC", sans-serif; color: #fff; text-shadow: 2px 3px 2px #000; white-space: nowrap; pointer-events: none; }
.watermark b { font-weight: 900; }
</style>
